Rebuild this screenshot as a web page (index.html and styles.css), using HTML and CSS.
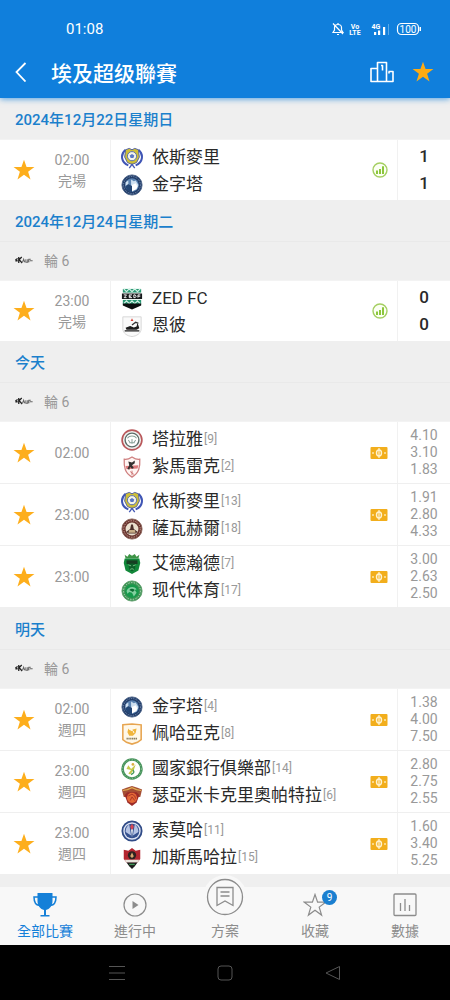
FILE: index.html
```
<!DOCTYPE html>
<html lang="zh-Hant">
<head>
  <meta charset="UTF-8">
  <meta name="viewport" content="width=device-width, initial-scale=1.0">
  <title>埃及超级聯賽</title>
  <link rel="stylesheet" href="styles.css">
</head>
<body>
  <!-- Icon sprite -->
  <svg class="sprite" aria-hidden="true">
    <symbol id="star" viewBox="0 0 24 24">
      <path d="M12 .8l2.800 8h8.600l-6.900 5.100 2.600 8.400-7.100-5.100-7.100 5.100 2.600-8.400L.6 8.800h8.600z" fill="currentColor"/>
    </symbol>
    <symbol id="league" viewBox="0 0 24 12">
      <path d="M.5 6l3-2M.5 7h3M5 2v8M5 6l4-4M5.500 5.500L9.500 10" stroke="#222" stroke-width="1.700" fill="none"/>
      <path d="M10 9l1.500-4 1.500 4M14.500 5v4h2.500V5M18.500 9V5h2.500M20 7h3.500" stroke="#666" stroke-width="1.400" fill="none"/>
    </symbol>
    <symbol id="stats" viewBox="0 0 16 16">
      <circle cx="8" cy="8" r="7" fill="#fbfff3" stroke="#a5cf62" stroke-width="1.400"/>
      <path d="M4 8.500h2v3.500H4zM7 7h2v5H7zM10 4.300h2V12h-2z" fill="#8cc63c"/>
    </symbol>
    <symbol id="odds" viewBox="0 0 18 12">
      <rect x=".5" width="17" height="12" rx="1" fill="#f2ae1c"/>
      <ellipse cx="9" cy="6" rx="2.500" ry="3" fill="none" stroke="#fff3d2" stroke-width="1.400"/>
      <path d="M9 1v10M3 5v2M15 5v2" stroke="#fff3d2" stroke-width="1.200"/>
    </symbol>

    <!-- Club crests -->
    <symbol id="ismaily" viewBox="0 0 24 24">
      <path d="M5 3C-1 8 0 17 8 20M19 3c6 5 5 14-3 17" fill="none" stroke="#3f55b5" stroke-width="2.200"/>
      <path d="M5 3l4-1.500L12 3l3-1.500L19 3l1 8-3 6-5 2-5-2-3-6z" fill="#cdbf38" stroke="#4c5a9c"/>
      <circle cx="12" cy="10" r="5" fill="#f5f5e8" stroke="#5268ad"/>
      <path d="M12 7.500l2.500 1.800-1 2.700h-3l-1-2.700z" fill="#5876c4"/>
      <path d="M9 23l3-4 3 4" fill="none" stroke="#4358b4" stroke-width="1.500"/>
    </symbol>
    <symbol id="pyramids" viewBox="0 0 24 24">
      <circle cx="12" cy="12" r="11" fill="#1f3a66" stroke="#496187"/>
      <circle cx="12" cy="12" r="9.200" fill="none" stroke="#8aa2c3" stroke-width="1" stroke-dasharray="1 1"/>
      <circle cx="12" cy="12" r="7.500" fill="#5b83b2"/>
      <path d="M5 13V9l3-2v4l3 2V6l3 2 2-1 3 5-2 5H8z" fill="#cfe0f0"/>
      <path d="M5 13l3-2 4 2v6.500c-4 0-6.500-2.500-7-6.500z" fill="#234675"/>
      <path d="M12 12l4-2 2 4-2 3-4 2z" fill="#fff"/>
    </symbol>
    <symbol id="zed" viewBox="0 0 24 24">
      <path d="M2 1h20v4H2z" fill="#2b9874"/>
      <path d="M3 1l3 3 3-3 3 3 3-3 3 3 3-3" stroke="#d4f3e7" stroke-width="1.300" fill="none"/>
      <path d="M1 6h22v6H1z" fill="#17191b"/>
      <path d="M3 7.500h3L3.500 10.500H6M12 7.500H9v3h3M9 9h2M14 7.500v3h1.500l1-1.500-1-1.500zM21 7.500h-2.500v3M18.500 9H21" fill="none" stroke="#fff" stroke-width="1"/>
      <path d="M2 13h20v5H2z" fill="#2b9874"/>
      <path d="M3 17l3-3 3 3 3-3 3 3 3-3 3 3" stroke="#d4f3e7" stroke-width="1.300" fill="none"/>
      <path d="M2 17h20v2l-10 4.500L2 19z" fill="#0c0f10"/>
    </symbol>
    <symbol id="enppi" viewBox="0 0 24 24">
      <path d="M2 2h20v13c0 5-5 8-10 8.500C7 23 2 20 2 15z" fill="#fafafa" stroke="#d4d4d4"/>
      <path d="M4 16.500h16V18H4zM5 14l5-2 4 1.500 3-1 1-4 2 6-3 1.500H6z" fill="#1d1d1d"/>
      <path d="M12 11l4-3 3 1" stroke="#333" stroke-width="1.400" fill="none"/>
      <path d="M12 3.500l1.500 3h-3z" fill="#d8453a"/>
    </symbol>
    <symbol id="tala" viewBox="0 0 24 24">
      <circle cx="12" cy="12" r="10.800" fill="#eef0ee" stroke="#b9585b" stroke-width="1.800"/>
      <circle cx="12" cy="12" r="7.500" fill="#fff" stroke="#5c6c68" stroke-width="1.500"/>
      <path d="M7 10c2-3 8-3 10 0M8 12l2 3M16 12l-2 3M12 11v5M9 15h6" fill="none" stroke="#8aa39a" stroke-width="1.100"/>
    </symbol>
    <symbol id="zamalek" viewBox="0 0 24 24">
      <path d="M12 1c3 2 6 3 8.500 2.500.5 9-1 15-8.500 19.500C4.500 18.500 3 12.500 3.500 3.500 6 4 9 3 12 1z" fill="#fff5f3" stroke="#cf8080" stroke-width="1.400"/>
      <path d="M5 11l14-1-1 3.500-12 1z" fill="#dc7a7c"/>
      <path d="M8 6l4 1 3-2v3l-3 2 2 3-2 1-2-2-1 3-2-1 2-4z" fill="#34302f"/>
      <path d="M12 16v5M10 17l4 3" stroke="#c96d6d"/>
    </symbol>
    <symbol id="ceramica" viewBox="0 0 24 24">
      <circle cx="12" cy="12" r="11" fill="#6a3630" stroke="#8b645a"/>
      <circle cx="12" cy="12" r="9" fill="none" stroke="#d3aaa0" stroke-dasharray="1.500 1.200"/>
      <circle cx="12" cy="12" r="7" fill="#eadfce"/>
      <path d="M6 15l4-3 1-5h2l1 5 4 3-2 2H8z" fill="#4c302b"/>
      <path d="M9 13h6l1 3H8z" fill="#c8ad86"/>
    </symbol>
    <symbol id="ittihad" viewBox="0 0 24 24">
      <path d="M4 2l3 2 2-3 3 2 3-2 2 3 3-2-1 4H5z" fill="#3e9446"/>
      <path d="M4 6h16l1 5-2 8-7 4-7-4-2-8z" fill="#12883a"/>
      <path d="M6 8h12v4H6z" fill="#173f23"/>
      <path d="M8 13c2-2 6-2 8 0l-1 5-3 2-3-2z" fill="#0b6029"/>
      <path d="M8 13l3 1M16 13l-3 1M10 18c1-1 3-1 4 0" stroke="#79c487" fill="none"/>
    </symbol>
    <symbol id="modern" viewBox="0 0 24 24">
      <circle cx="12" cy="12" r="11" fill="#3c9454" stroke="#5b9b68"/>
      <circle cx="12" cy="12" r="9.200" fill="none" stroke="#c2e0c7" stroke-dasharray="1.500 1.500"/>
      <circle cx="12" cy="12" r="7.500" fill="#16994b"/>
      <path d="M6 12c2-5 8-6 11-2l-2 1 2 3-3 4-2-4-3-1-2 2z" fill="#83d0a0"/>
      <path d="M9 11c2-2 4-2 6 0l-2 2z" fill="#0e6b34"/>
    </symbol>
    <symbol id="pharco" viewBox="0 0 24 24">
      <path d="M2 2l10-1 10 1v16l-4 3-6 2-6-2-4-3z" fill="#fff8e9" stroke="#e7a550" stroke-width="1.700"/>
      <path d="M8 6c1 2 3 3 5 1l4-1-1 5-3 3H9l-2-4z" fill="#f0b53d"/>
      <path d="M11 8c2 0 3 1 3 3" stroke="#fff" fill="none"/>
      <path d="M6 17h12" stroke="#8b8062" stroke-width="1.800" stroke-dasharray="1.500 .5"/>
    </symbol>
    <symbol id="nbe" viewBox="0 0 24 24">
      <circle cx="12" cy="12" r="10.300" fill="#fff" stroke="#46935b" stroke-width="2.800"/>
      <circle cx="12" cy="12" r="10.300" fill="none" stroke="#b7d9b9" stroke-width=".8" stroke-dasharray="1 2"/>
      <path d="M8 8l3 4 5-5-2 6-4 5-2-1 3-4-5-1z" fill="#c8c84a"/>
      <path d="M13 13c2 2 1 4-2 5" fill="none" stroke="#459a58" stroke-width="1.500"/>
      <circle cx="13" cy="7" r="1.500" fill="#dcaf42"/>
    </symbol>
    <symbol id="cleopatra" viewBox="0 0 24 24">
      <path d="M1 5l5-2 6-2 6 2 5 2-2 8H3z" fill="#a44e34"/>
      <path d="M2 6l5-1 5-2 5 2 5 1" fill="none" stroke="#e2ae53" stroke-width="1.300"/>
      <path d="M4 11l3-3h10l3 3-3 8-5 4-5-4z" fill="#9c2b28"/>
      <circle cx="12" cy="14" r="5.500" fill="#e36837"/>
      <path d="M8 12l4-2 3 2 1 3M10 17l2-4 3 4" stroke="#a93425" fill="none"/>
    </symbol>
    <symbol id="smouha" viewBox="0 0 24 24">
      <circle cx="12" cy="12" r="10.500" fill="#dce2f2" stroke="#304b87" stroke-width="2"/>
      <circle cx="12" cy="12" r="8" fill="#34508f"/>
      <path d="M5 13c0-4 2-7 4-8l2 12zM19 13c0-4-2-7-4-8l-2 12z" fill="#b5c3e4"/>
      <path d="M11 10h2l-1 9z" fill="#fff"/>
      <path d="M12 4l2 3-1 3h-2l-1-3z" fill="#d44757"/>
    </symbol>
    <symbol id="ghazl" viewBox="0 0 24 24">
      <path d="M3 3l5 1 4-3 4 3 5-1v10l-3 4H6l-3-4z" fill="#b32630"/>
      <circle cx="12" cy="9" r="4.500" fill="#2c2220"/>
      <path d="M10 10l2-4 2 4-2 2z" fill="#d6a66e"/>
      <path d="M4 14h16l-2 3H6z" fill="#e9e5de"/>
      <path d="M6 17h12l-3 4-3 3-3-3z" fill="#1b1b1b"/>
      <path d="M9 19h6" stroke="#3f9455" stroke-width="1.500"/>
    </symbol>
  </svg>

  <header class="header">
    <div class="status-bar">
      <span class="clock">01:08</span>
      <svg class="status-icons" width="98" height="18" viewBox="0 0 98 18" aria-hidden="true">
        <g fill="none" stroke="#fff" stroke-width="1.200">
          <path d="M3 12.500h10L11.500 10V7.500c0-4-7-4-7 0V10zM7 14.500h2M8 3v1.500M3 3.500l10 10.500"/>
          <rect x="67.500" y="3.500" width="21" height="11" rx="4"/>
        </g>
        <path d="M89.500 7h1.500v4h-1.500zM44 12h2.200v3H44zM48 10.500h2.200V15H48zM53 7h2.200v8H53z" fill="#fff"/>
        <path d="M58.500 4v11" stroke="#5aa9e8"/>
        <text x="25" y="9" class="tiny">Vo</text>
        <text x="25" y="15" class="tiny">LTE</text>
        <text x="46" y="9" class="tiny">4G</text>
        <text x="78" y="12.500" class="battery">100</text>
      </svg>
    </div>
    <div class="app-bar">
      <button class="icon-button" type="button" aria-label="返回">
        <svg width="12" height="20" viewBox="0 0 12 20"><path d="M10.500 1L1.500 10l9 9.500" fill="none" stroke="#fff" stroke-width="1.800"/></svg>
      </button>
      <h1 class="title">埃及超级聯賽</h1>
      <button class="icon-button" type="button" aria-label="排名">
        <svg width="24" height="22" viewBox="0 0 24 22"><path d="M7.500 20.500V1.500h9v19M7.500 7.500H1v13h22V10.500h-4.500M12.500 9.500v-5h-1.500M19 10.500v2" fill="none" stroke="#fff" stroke-width="1.600" stroke-linejoin="round"/></svg>
      </button>
      <button class="icon-button favourite" type="button" aria-label="收藏">
        <svg width="22" height="22"><use href="#star"/></svg>
      </button>
    </div>
  </header>

  <main class="fixtures">
    <section>
      <h2 class="day">2024年12月22日星期日</h2>
      <ul class="matches">
        <li class="match">
          <button class="star" type="button" aria-label="收藏"><svg width="22" height="22"><use href="#star"/></svg></button>
          <div class="time">02:00<br>完場</div>
          <div class="teams">
            <div class="team"><svg class="crest"><use href="#ismaily"/></svg>依斯麥里</div>
            <div class="team"><svg class="crest"><use href="#pyramids"/></svg>金字塔</div>
          </div>
          <svg class="marker" width="16" height="16"><use href="#stats"/></svg>
          <div class="score">1<br>1</div>
        </li>
      </ul>
    </section>

    <section>
      <h2 class="day">2024年12月24日星期二</h2>
      <h3 class="round"><svg width="18" height="10"><use href="#league"/></svg>輪 6</h3>
      <ul class="matches">
        <li class="match">
          <button class="star" type="button" aria-label="收藏"><svg width="22" height="22"><use href="#star"/></svg></button>
          <div class="time">23:00<br>完場</div>
          <div class="teams">
            <div class="team"><svg class="crest"><use href="#zed"/></svg>ZED FC</div>
            <div class="team"><svg class="crest"><use href="#enppi"/></svg>恩彼</div>
          </div>
          <svg class="marker" width="16" height="16"><use href="#stats"/></svg>
          <div class="score">0<br>0</div>
        </li>
      </ul>
    </section>

    <section>
      <h2 class="day">今天</h2>
      <h3 class="round"><svg width="18" height="10"><use href="#league"/></svg>輪 6</h3>
      <ul class="matches">
        <li class="match upcoming">
          <button class="star" type="button" aria-label="收藏"><svg width="22" height="22"><use href="#star"/></svg></button>
          <div class="time">02:00</div>
          <div class="teams">
            <div class="team"><svg class="crest"><use href="#tala"/></svg>塔拉雅<span class="rank">[9]</span></div>
            <div class="team"><svg class="crest"><use href="#zamalek"/></svg>紮馬雷克<span class="rank">[2]</span></div>
          </div>
          <svg class="marker" width="18" height="12"><use href="#odds"/></svg>
          <div class="odds">4.10<br>3.10<br>1.83</div>
        </li>
        <li class="match upcoming">
          <button class="star" type="button" aria-label="收藏"><svg width="22" height="22"><use href="#star"/></svg></button>
          <div class="time">23:00</div>
          <div class="teams">
            <div class="team"><svg class="crest"><use href="#ismaily"/></svg>依斯麥里<span class="rank">[13]</span></div>
            <div class="team"><svg class="crest"><use href="#ceramica"/></svg>薩瓦赫爾<span class="rank">[18]</span></div>
          </div>
          <svg class="marker" width="18" height="12"><use href="#odds"/></svg>
          <div class="odds">1.91<br>2.80<br>4.33</div>
        </li>
        <li class="match upcoming">
          <button class="star" type="button" aria-label="收藏"><svg width="22" height="22"><use href="#star"/></svg></button>
          <div class="time">23:00</div>
          <div class="teams">
            <div class="team"><svg class="crest"><use href="#ittihad"/></svg>艾德瀚德<span class="rank">[7]</span></div>
            <div class="team"><svg class="crest"><use href="#modern"/></svg>现代体育<span class="rank">[17]</span></div>
          </div>
          <svg class="marker" width="18" height="12"><use href="#odds"/></svg>
          <div class="odds">3.00<br>2.63<br>2.50</div>
        </li>
      </ul>
    </section>

    <section>
      <h2 class="day">明天</h2>
      <h3 class="round"><svg width="18" height="10"><use href="#league"/></svg>輪 6</h3>
      <ul class="matches">
        <li class="match upcoming">
          <button class="star" type="button" aria-label="收藏"><svg width="22" height="22"><use href="#star"/></svg></button>
          <div class="time">02:00<br>週四</div>
          <div class="teams">
            <div class="team"><svg class="crest"><use href="#pyramids"/></svg>金字塔<span class="rank">[4]</span></div>
            <div class="team"><svg class="crest"><use href="#pharco"/></svg>佩哈亞克<span class="rank">[8]</span></div>
          </div>
          <svg class="marker" width="18" height="12"><use href="#odds"/></svg>
          <div class="odds">1.38<br>4.00<br>7.50</div>
        </li>
        <li class="match upcoming">
          <button class="star" type="button" aria-label="收藏"><svg width="22" height="22"><use href="#star"/></svg></button>
          <div class="time">23:00<br>週四</div>
          <div class="teams">
            <div class="team"><svg class="crest"><use href="#nbe"/></svg>國家銀行俱樂部<span class="rank">[14]</span></div>
            <div class="team"><svg class="crest"><use href="#cleopatra"/></svg>瑟亞米卡克里奧帕特拉<span class="rank">[6]</span></div>
          </div>
          <svg class="marker" width="18" height="12"><use href="#odds"/></svg>
          <div class="odds">2.80<br>2.75<br>2.55</div>
        </li>
        <li class="match upcoming">
          <button class="star" type="button" aria-label="收藏"><svg width="22" height="22"><use href="#star"/></svg></button>
          <div class="time">23:00<br>週四</div>
          <div class="teams">
            <div class="team"><svg class="crest"><use href="#smouha"/></svg>索莫哈<span class="rank">[11]</span></div>
            <div class="team"><svg class="crest"><use href="#ghazl"/></svg>加斯馬哈拉<span class="rank">[15]</span></div>
          </div>
          <svg class="marker" width="18" height="12"><use href="#odds"/></svg>
          <div class="odds">1.60<br>3.40<br>5.25</div>
        </li>
      </ul>
    </section>
  </main>

  <nav class="tab-bar">
    <a href="#" class="tab active">
      <svg width="24" height="24" viewBox="0 0 24 24"><path d="M4.500 0h15v8c0 5-3 8-6.500 9v5h3.500v1.500h-9V22H11v-5c-3.500-1-6.500-4-6.500-9z" fill="currentColor"/><path d="M5 4H1c0 5 1 8 5.500 8.500M19 4h4c0 5-1 8-5.500 8.500" fill="none" stroke="currentColor" stroke-width="1.500"/></svg>
      全部比賽
    </a>
    <a href="#" class="tab">
      <svg width="24" height="24" viewBox="0 0 24 24"><circle cx="12" cy="12" r="11" fill="none" stroke="currentColor" stroke-width="1.200"/><path d="M9.500 8l6 4-6 4z" fill="currentColor"/></svg>
      進行中
    </a>
    <a href="#" class="tab raised">
      <svg width="44" height="44" viewBox="0 0 44 44"><circle cx="22" cy="22" r="22" fill="#f8f8f8"/><circle cx="22" cy="22" r="17.500" fill="none" stroke="currentColor" stroke-width="1.300"/><path d="M14 12.500h16v18l-8-4.500-8 4.500zM17.500 17h9M17.500 21h9" fill="none" stroke="currentColor" stroke-width="1.300"/></svg>
      方案
    </a>
    <a href="#" class="tab">
      <svg width="24" height="24" viewBox="0 0 24 24"><path d="M12 1.500l2.600 7.700h8l-6.400 4.900 2.400 8-6.600-4.800-6.600 4.800 2.400-8-6.400-4.900h8z" fill="none" stroke="currentColor" stroke-width="1.200"/></svg>
      收藏
      <span class="badge">9</span>
    </a>
    <a href="#" class="tab">
      <svg width="24" height="24" viewBox="0 0 24 24"><rect x="1" y="1" width="22" height="21.500" rx="1" fill="none" stroke="currentColor" stroke-width="1.300"/><path d="M7.500 10v8M12 6v12M16.500 12v6" stroke="currentColor" stroke-width="1.300"/></svg>
      數據
    </a>
  </nav>

  <div class="system-nav">
    <button type="button" aria-label="最近"><svg width="16" height="16" viewBox="0 0 16 16"><path d="M0 1.500h16M0 8h16M0 14.500h16"/></svg></button>
    <button type="button" aria-label="主頁"><svg width="16" height="16" viewBox="0 0 16 16"><rect x="1" y="1" width="14" height="14" rx="3"/></svg></button>
    <button type="button" aria-label="返回"><svg width="16" height="16" viewBox="0 0 16 16"><path d="M14.500 1.500v13L1 8z" stroke-linejoin="round"/></svg></button>
  </div>
</body>
</html>
```
FILE: styles.css
```
* {
  box-sizing: border-box;
}

body {
  display: flex;
  flex-direction: column;
  min-height: 100vh;
  margin: 0;
  font-family: Roboto, "Noto Sans CJK TC", sans-serif;
  color: #2a2a2a;
  background-color: #efefef;
}

button {
  padding: 0;
  border: none;
  background: none;
  color: inherit;
}

svg {
  display: block;
  flex: none;
}

.sprite {
  position: absolute;
  width: 0;
  height: 0;
}

/* Header */
.header {
  position: relative;
  color: #fff;
  background-color: #107fdc;
  box-shadow: 0 1px 6px rgba(16, 127, 220, 0.7);
}

.status-bar {
  display: flex;
  align-items: center;
  justify-content: space-between;
  height: 48px;
  padding: 10px 22px 0 66px;
}

.clock {
  font-size: 15px;
}

.tiny {
  font-size: 7px;
  font-weight: bold;
  text-anchor: middle;
  fill: #fff;
}

.battery {
  font-size: 10px;
  text-anchor: middle;
  fill: #fff;
}

.app-bar {
  display: flex;
  align-items: center;
  height: 50px;
  padding: 0 16px 2px 15px;
}

.title {
  flex: 1;
  margin: 0 0 0 24px;
  font-size: 21px;
  font-weight: 500;
}

.favourite {
  margin-left: 18px;
  color: #fdab13;
}

/* Fixture list */
.fixtures {
  flex: 1;
  padding-bottom: 12px;
}

.day,
.round {
  display: flex;
  align-items: center;
  margin: 0;
  padding: 0 15px;
}

.day {
  height: 41px;
  font-size: 15px;
  font-weight: 500;
  color: #1b80cc;
}

.round {
  gap: 11px;
  height: 39px;
  padding-bottom: 2px;
  border-top: 1px solid #e9e9e9;
  font-size: 14px;
  font-weight: normal;
  color: #999;
}

.matches {
  margin: 0;
  padding: 0;
  border-top: 1px solid #f3f3f3;
  list-style: none;
}

.match {
  display: flex;
  align-items: center;
  background-color: #fff;
}

.upcoming {
  border-bottom: 1px solid #efefef;
}

.star {
  display: flex;
  justify-content: center;
  width: 48px;
  color: #fdae1c;
}

.time {
  width: 48px;
  margin-right: 14px;
  padding-top: 1px;
  font-size: 14px;
  line-height: 21px;
  text-align: center;
  color: #999;
}

.teams {
  flex: 1;
  padding: 4px 0 2px 10px;
  border-left: 1px solid #f1f1f1;
}

.upcoming .teams {
  padding-bottom: 3px;
}

.team {
  display: flex;
  align-items: center;
  font-size: 17px;
  line-height: 27px;
  white-space: nowrap;
}

.crest {
  width: 22px;
  height: 22px;
  margin-right: 9px;
}

.rank {
  margin-left: 1px;
  font-size: 12px;
  color: #999;
}

.marker {
  margin-right: 9px;
}

.score,
.odds {
  align-self: stretch;
  width: 53px;
  border-left: 1px solid #f1f1f1;
  text-align: center;
}

.score {
  padding-top: 3px;
  font-size: 17px;
  font-weight: 500;
  line-height: 27px;
}

.odds {
  padding-top: 5px;
  font-size: 14px;
  line-height: 17px;
  color: #999;
}

/* Bottom tabs */
.tab-bar {
  display: flex;
  background-color: #f8f8f8;
}

.tab {
  position: relative;
  display: flex;
  flex: 1;
  flex-direction: column;
  align-items: center;
  gap: 4px;
  height: 58px;
  padding-top: 6px;
  font-size: 14px;
  line-height: 20px;
  text-decoration: none;
  color: #8c8c8c;
}

.tab.active {
  color: #1580d8;
}

/* The middle icon rises above the bar */
.raised svg {
  margin: -18px 0 -2px;
}

.badge {
  position: absolute;
  top: 3px;
  left: calc(50% + 7px);
  width: 15px;
  height: 15px;
  border-radius: 50%;
  font-size: 10px;
  line-height: 15px;
  text-align: center;
  color: #fff;
  background-color: #1a7fd0;
}

.system-nav {
  display: flex;
  align-items: center;
  justify-content: center;
  gap: 92px;
  height: 55px;
  background-color: #000;
}

.system-nav svg {
  fill: none;
  stroke: #555;
  stroke-width: 1px;
}
```
